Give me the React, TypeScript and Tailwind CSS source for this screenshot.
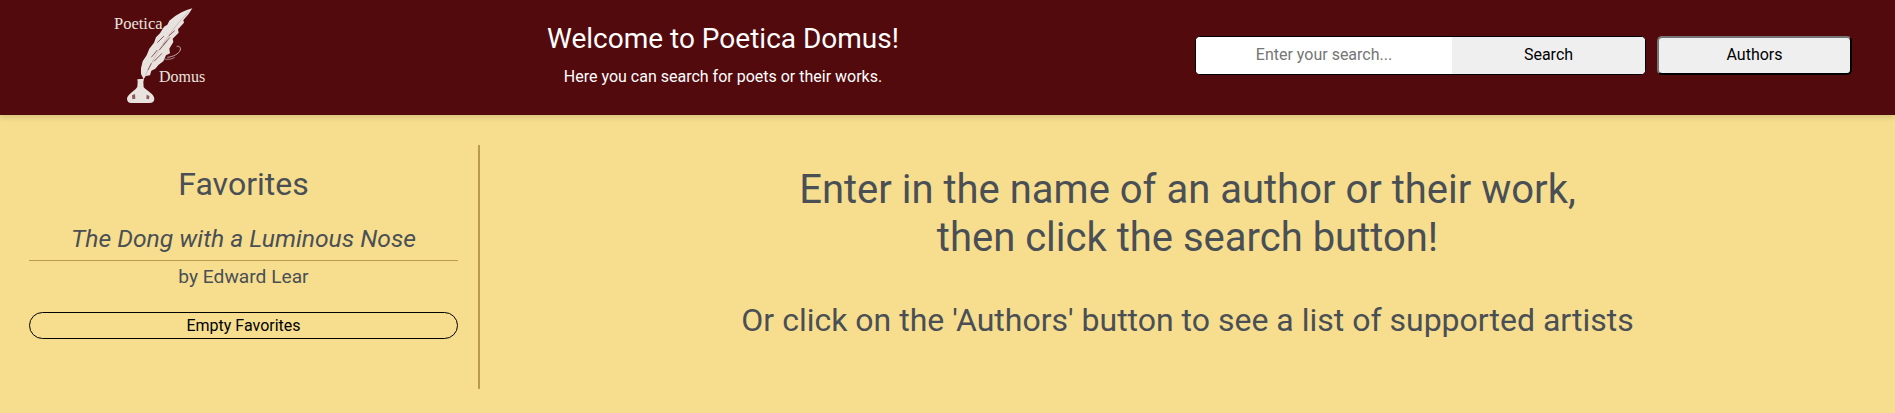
function Logo() {
  return (
    <div className="relative h-[115px] w-[170px] shrink-0">
      <svg viewBox="0 0 510 345" className="h-full w-full" fill="#e8e3df">
        {/* feather */}
        <path d="M337 25 C315 30 292 42 268 62 L262 74 L252 80 L240 100 L228 112 L222 128 L208 146 L200 166 L188 184 L183 205 L183 222 L191 238 L197 228 L210 226 L214 212 L226 206 L236 194 L250 184 L258 166 L270 160 L268 146 L280 126 L278 116 L296 98 L294 88 L312 68 L310 60 L326 42 Z" />
        <path d="M326 36 C290 70 240 135 196 226" fill="none" stroke="#b9a9a6" strokeWidth="2" />
        <path d="M252 108 L232 128 M262 122 L238 150 M270 112 L250 134 M232 150 L214 172 M246 160 L222 184 M214 190 L204 210 M284 92 L266 108" fill="none" stroke="#8a5a5a" strokeWidth="3" />
        <path d="M262 172 C280 170 296 162 301 150 C303 142 296 136 290 140" fill="none" stroke="#d9c9c6" strokeWidth="2.5" />
        <path d="M250 176 C262 180 276 178 284 172" fill="none" stroke="#d9c9c6" strokeWidth="2" />
        {/* inkwell */}
        <path d="M172 238 L192 236 L190 246 L191 262 C200 272 222 282 223 296 C223 304 218 309 208 309 L154 309 C146 309 141 304 141 296 C142 282 166 272 172 260 L173 246 Z" />
        <path d="M156 286 L165 282 L166 296 L157 298 Z M200 284 L208 288 L207 298 L199 296 Z" fill="#8a5a5a" />
      </svg>
      <span className="absolute left-[34px] top-[16px] font-['Liberation_Serif',serif] text-[16.5px] leading-none text-[#e8e3df]">Poetica</span>
      <span className="absolute left-[79px] top-[69px] font-['Liberation_Serif',serif] text-[16px] leading-none text-[#e8e3df]">Domus</span>
    </div>
  );
}

export default function App() {
  return (
    <div className="h-[413px] overflow-hidden bg-[#f6de8e] font-['Roboto',sans-serif] text-[#4a4f55]">
      <header className="relative flex h-[115px] items-center bg-[#530a0d] shadow-[0_2px_6px_rgba(0,0,0,0.15)]">
        <div className="ml-[80px] w-[306px]">
          <Logo />
        </div>
        <div className="w-[674px] pb-[8px] text-center text-white">
          <h1 className="text-[28px] leading-[34px]">Welcome to Poetica Domus!</h1>
          <p className="mt-[11px] text-base leading-[19px]">Here you can search for poets or their works.</p>
        </div>
        <div className="ml-[135px] flex gap-[11px] pb-[5px]">
          <form className="flex h-[39px] w-[451px] overflow-hidden rounded-[5px] border border-black bg-white">
            <input placeholder="Enter your search..." className="w-[256px] bg-white text-center text-base text-black outline-none placeholder:text-[#757575]" />
            <button type="button" className="flex-1 bg-[#efefef] text-base text-black">Search</button>
          </form>
          <button type="button" className="h-[39px] w-[195px] rounded-[5px] border-2 border-t-[#767676] border-l-[#767676] border-r-black border-b-black bg-[#efefef] text-base text-black">Authors</button>
        </div>
      </header>
      <main className="flex pt-[30px]">
        <aside className="h-[244px] w-[480px] shrink-0 border-r-[2px] border-[#b99c4a] pl-[29px] pr-[20px]">
          <h2 className="mt-[20px] text-center text-[32px] leading-[38px]">Favorites</h2>
          <p className="mt-[21px] text-center text-[24.7px] italic leading-[30px]">The Dong with a Luminous Nose</p>
          <div className="mt-[6px] border-t border-[#b99c4a] pt-[4px] text-center text-[19.2px] leading-[24px]">by Edward Lear</div>
          <button type="button" className="mt-[23px] h-[27px] w-full rounded-full border border-black text-base leading-none text-black">Empty Favorites</button>
        </aside>
        <section className="flex-1 pt-[21px] text-center">
          <h2 className="text-[40px] leading-[48px]">Enter in the name of an author or their work,<br />then click the search button!</h2>
          <p className="mt-[39px] text-[32px] leading-[38px]">Or click on the 'Authors' button to see a list of supported artists</p>
        </section>
      </main>
    </div>
  );
}
